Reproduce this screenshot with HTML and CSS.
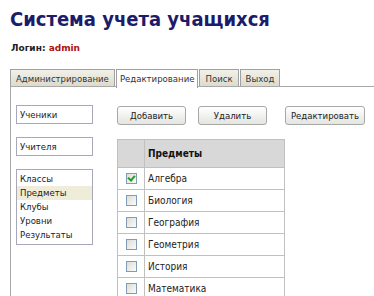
FILE: index.html
```html
<!DOCTYPE html>
<html lang="ru">
<head>
  <meta charset="UTF-8" />
  <title>Система учета учащихся</title>
  <link rel="stylesheet" href="styles.css">
</head>
<body>
  <h1 class="title">Система учета учащихся</h1>
  <p class="login">Логин: <span class="user">admin</span></p>

  <div class="tabs">
    <span class="tab">Администрирование</span>
    <span class="tab active">Редактирование</span>
    <span class="tab">Поиск</span>
    <span class="tab">Выход</span>
  </div>

  <div class="panel">
    <div class="side">
      <div class="field">Ученики</div>
      <div class="field">Учителя</div>
      <ul class="list">
        <li>Классы</li>
        <li class="selected">Предметы</li>
        <li>Клубы</li>
        <li>Уровни</li>
        <li>Результаты</li>
      </ul>
    </div>

    <div class="main">
      <div class="button-row">
        <button type="button" class="btn">Добавить</button>
        <button type="button" class="btn">Удалить</button>
        <button type="button" class="btn wide">Редактировать</button>
      </div>

      <table class="grid">
        <tr class="head">
          <th class="check-col"></th>
          <th>Предметы</th>
        </tr>
        <tr><td class="check-col"><span class="box checked"></span></td><td>Алгебра</td></tr>
        <tr><td class="check-col"><span class="box"></span></td><td>Биология</td></tr>
        <tr><td class="check-col"><span class="box"></span></td><td>География</td></tr>
        <tr><td class="check-col"><span class="box"></span></td><td>Геометрия</td></tr>
        <tr><td class="check-col"><span class="box"></span></td><td>История</td></tr>
        <tr><td class="check-col"><span class="box"></span></td><td>Математика</td></tr>
      </table>
    </div>
  </div>
</body>
</html>
```

FILE: styles.css
```css
body {
  margin: 0;
  font-family: "DejaVu Sans Condensed", "DejaVu Sans", sans-serif;
  font-size: 9.5px;
  color: #222;
  background: #fff;
}

.title {
  margin: 0;
  padding: 7px 0 0 10px;
  font-size: 20px;
  font-weight: bold;
  color: #1c1c6a;
}

.login {
  margin: 12px 0 0 11px;
  font-family: "DejaVu Sans", sans-serif;
  font-size: 9px;
  font-weight: bold;
  color: #222;
}

.login .user {
  color: #b01010;
}

/* Tabs */
.tabs {
  display: flex;
  gap: 1px;
  margin-top: 16px;
  padding-left: 10px;
  height: 17px;
}

.tab {
  display: block;
  padding: 1px 5px 0;
  border: 1px solid #a0a0a0;
  border-bottom: none;
  background: linear-gradient(#f2f1ea, #dddbcb);
  color: #333;
  line-height: 15px;
}

.tab.active {
  background: #fff;
  height: 17px;
  margin-bottom: -1px;
  padding: 1px 3px 0;
  position: relative;
}

/* Content panel */
.panel {
  display: flex;
  gap: 24px;
  margin-left: 10px;
  padding: 18px 0 0 5px;
  border-left: 1px solid #a8a8a8;
  border-top: 1px solid #a8a8a8;
  height: 200px;
}

.side {
  width: 77px;
}

.field {
  height: 17px;
  line-height: 17px;
  padding-left: 3px;
  margin-bottom: 13px;
  border: 1px solid #a8a8b8;
  color: #222;
}

.list {
  list-style: none;
  margin: 0;
  padding: 2px 0 2px 0;
  border: 1px solid #a8a8b8;
}

.list li {
  height: 14px;
  line-height: 14px;
  padding-left: 3px;
}

.list li.selected {
  background: #efedd9;
}

/* Buttons */
.button-row {
  display: flex;
  gap: 12px;
  margin-top: 1px;
}

.btn {
  width: 69px;
  height: 19px;
  padding: 0;
  font-family: inherit;
  font-size: 9.5px;
  color: #222;
  border: 1px solid #a8a8a8;
  border-radius: 3px;
  background: linear-gradient(#ffffff, #e4e4e0);
}

.btn.wide {
  width: 80px;
  margin-left: 6px;
}

/* Table */
.grid {
  margin-top: 14px;
  width: 168px;
  border-collapse: collapse;
  border: 1px solid #b0b0b0;
}

.grid th,
.grid td {
  border: 1px solid #c0c0c0;
  text-align: left;
  padding: 0 0 0 3px;
  height: 21px;
  font-size: 10px;
}

.grid .head th {
  background: #d8d8d8;
  height: 27px;
  font-weight: bold;
  color: #111;
}

.grid .check-col {
  width: 26px;
  padding: 0;
  text-align: center;
}

.box {
  display: inline-block;
  width: 9px;
  height: 9px;
  border: 1px solid #7f9db9;
  background: linear-gradient(135deg, #dcdcd8, #fbfbf9);
  vertical-align: middle;
  position: relative;
}

.box.checked::after {
  content: "";
  position: absolute;
  left: 2px;
  top: 0;
  width: 3px;
  height: 5px;
  border: solid #21a121;
  border-width: 0 2px 2px 0;
  transform: rotate(40deg);
}
```
